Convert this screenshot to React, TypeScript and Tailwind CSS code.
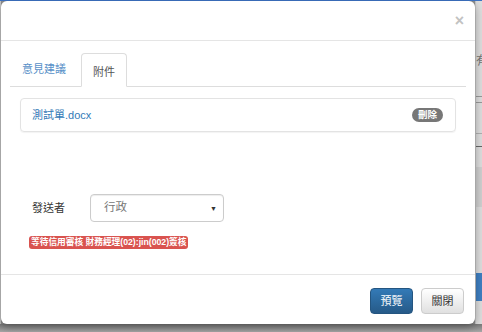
import React from 'react';

const font = { fontFamily: '"Liberation Sans", "Noto Sans CJK TC", Arial, sans-serif' };

const App: React.FC = () => {
  return (
    <div className="w-[482px] h-[332px] overflow-hidden flex flex-col bg-[#8f8f8f]" style={font}>
      {/* page behind the modal */}
      <div className="h-px bg-[#3d74c6]" />
      <div className="flex h-[323px]">
        <div className="w-px bg-[#c6c6c6]" />

        {/* Modal */}
        <div className="w-[474px] h-[323px] bg-white rounded-md shadow-[0_3px_10px_rgba(0,0,0,0.35)] flex flex-col z-10">
          <div className="h-[39px] border-b border-[#e5e5e5] flex items-center justify-end pr-[11px] box-content">
            <span className="text-[16px] font-bold leading-none text-[#c2c2c2]">×</span>
          </div>

          {/* Body */}
          <div className="flex-1 px-[9px] pt-[12px] flex flex-col">
            {/* Tabs */}
            <div className="flex border-b border-[#dddddd] h-[34px]">
              <div className="h-[33px] px-[11px] mr-[3px] flex items-center text-[11px] text-[#5890c8] border border-transparent">
                意見建議
              </div>
              <div className="h-[34px] px-[11px] flex items-start pt-[10px] text-[11px] text-[#555555] bg-white border border-[#dddddd] border-b-white rounded-t">
                附件
              </div>
            </div>

            {/* Attachment panel */}
            <div className="mt-[11px] mx-[10px] h-[34px] border border-[#e3e3e3] rounded shadow-[0_1px_1px_rgba(0,0,0,0.05)] flex items-center justify-between pl-[11px] pr-[12px]">
              <span className="text-[11px] text-[#337ab7]">測試單.docx</span>
              <span className="h-[14px] w-[31px] rounded-full bg-[#777777] text-white text-[9.5px] font-bold flex items-center justify-center leading-none">
                刪除
              </span>
            </div>

            {/* Sender row */}
            <div className="mt-[62px] pl-[22px] flex items-center h-[28px]">
              <span className="w-[58px] text-[11px] text-[#333333]">發送者</span>
              <div className="w-[134px] h-[28px] border border-[#cccccc] rounded flex items-center justify-between pl-[13px] pr-[6px] shadow-[inset_0_1px_1px_rgba(0,0,0,0.075)]">
                <span className="text-[11.5px] text-[#777777]">行政</span>
                <span className="text-[7px] text-[#333333] leading-none">▼</span>
              </div>
            </div>

            <div className="mt-[14px] ml-[19px] self-start h-[13px] px-[2px] bg-[#d9534f] rounded-[3px] text-white text-[8.7px] font-bold leading-none flex items-center whitespace-nowrap">
              等待信用審核 財務經理(02):jin(002)簽核
            </div>
          </div>

          {/* Footer */}
          <div className="h-[50px] border-t border-[#e5e5e5] flex justify-end items-start pt-[13px] pr-[11px] gap-[8px]">
            <button className="w-[43px] h-[26px] rounded border border-[#245580] bg-gradient-to-b from-[#337ab7] to-[#265a88] text-white text-[11px]">
              預覽
            </button>
            <button className="w-[43px] h-[26px] rounded border border-[#cccccc] bg-gradient-to-b from-white to-[#e0e0e0] text-[#333333] text-[11px]">
              關閉
            </button>
          </div>
        </div>

        {/* Right strip of the page */}
        <div className="flex-1 flex flex-col bg-[#dedede] border-l border-[#c8c8c8] overflow-hidden">
          <div className="h-[50px]" />
          <div className="h-[20px] text-[12px] text-[#777777] leading-[20px] whitespace-nowrap">有</div>
          <div className="h-[25px]" />
          <div className="h-px bg-[#9a9a9a]" />
          <div className="h-[5px]" />
          <div className="h-px bg-[#9a9a9a]" />
          <div className="h-[30px]" />
          <div className="h-px bg-[#b0b0b0]" />
          <div className="h-[12px]" />
          <div className="h-px bg-[#666666]" />
          <div className="h-[20px]" />
          <div className="h-[40px] bg-[#d0d0d0]" />
          <div className="h-[66px]" />
          <div className="h-[28px] bg-[#3f7fc2]" />
        </div>
      </div>
      <div className="flex-1 bg-gradient-to-b from-[#7a7a7a] to-[#a8a8a8]" />
    </div>
  );
};

export default App;
